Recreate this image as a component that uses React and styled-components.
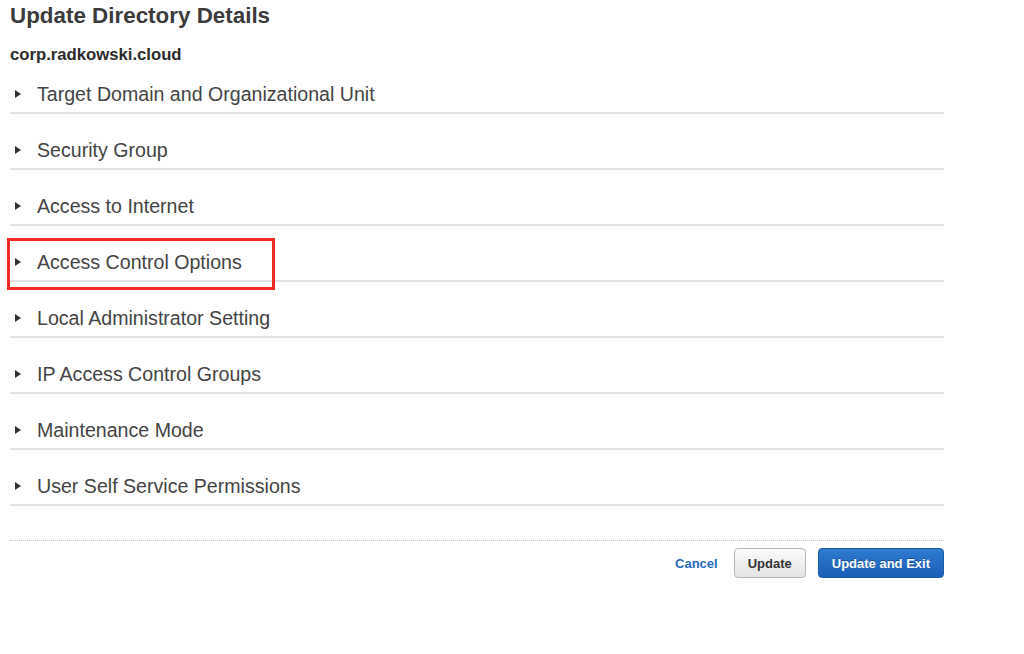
import React from 'react';
import styled, { createGlobalStyle } from 'styled-components';

const GlobalStyle = createGlobalStyle`
  body {
    margin: 0;
    background: #fff;
    font-family: "Liberation Sans", Arial, sans-serif;
    color: #444;
  }
`;

const Page = styled.div`
  width: 934px;
  padding: 3px 0 0 10px;
`;

const Title = styled.h1`
  margin: 0;
  font-size: 22.4px;
  line-height: 26px;
  font-weight: bold;
  color: #3b3b3b;
`;

const Domain = styled.div`
  margin-top: 17px;
  font-size: 16.7px;
  line-height: 18px;
  font-weight: bold;
  color: #2b2b2b;
`;

const List = styled.div`
  display: flex;
  flex-direction: column;
  margin-top: -6px;
`;

const Row = styled.div`
  position: relative;
  display: flex;
  align-items: center;
  height: 20px;
  padding: 26px 0 8px 0;
  border-bottom: 2px solid #e3e3e3;
`;

const Caret = styled.span`
  width: 0;
  height: 0;
  margin: 0 16px 0 5px;
  border-top: 4.5px solid transparent;
  border-bottom: 4.5px solid transparent;
  border-left: 6px solid #333;
`;

const Label = styled.span`
  font-size: 19.6px;
  color: #444;
`;

const Highlight = styled.div`
  position: absolute;
  left: -3px;
  top: 12px;
  width: 262px;
  height: 46px;
  border: 3px solid #ee2a24;
`;

const Footer = styled.div`
  margin-top: 34px;
  border-top: 1px dotted #c4c4c4;
  display: flex;
  justify-content: flex-end;
  align-items: center;
  padding-top: 7px;
`;

const LinkButton = styled.button`
  border: none;
  background: none;
  font-family: inherit;
  font-size: 13px;
  font-weight: bold;
  color: #1f6bc1;
  padding: 0;
  margin-right: 16px;
  cursor: pointer;
`;

const Button = styled.button`
  height: 30px;
  padding: 0 13px;
  margin-left: ${p => (p.primary ? '12px' : '0')};
  border-radius: 4px;
  font-family: inherit;
  font-size: 13px;
  font-weight: bold;
  cursor: pointer;
  border: 1px solid ${p => (p.primary ? '#1a5aa6' : '#b5b5b5')};
  color: ${p => (p.primary ? '#fff' : '#333')};
  background: ${p =>
    p.primary
      ? 'linear-gradient(#2f7bd2, #1a5fb7)'
      : 'linear-gradient(#fbfbfb, #e4e4e4)'};
  text-shadow: ${p => (p.primary ? '0 -1px 0 rgba(0,0,0,0.3)' : 'none')};
`;

const sections = [
  'Target Domain and Organizational Unit',
  'Security Group',
  'Access to Internet',
  'Access Control Options',
  'Local Administrator Setting',
  'IP Access Control Groups',
  'Maintenance Mode',
  'User Self Service Permissions',
];

export default function App() {
  return (
    <Page>
      <GlobalStyle />
      <Title>Update Directory Details</Title>
      <Domain>corp.radkowski.cloud</Domain>
      <List>
        {sections.map(s => (
          <Row key={s}>
            <Caret />
            <Label>{s}</Label>
            {s === 'Access Control Options' && <Highlight />}
          </Row>
        ))}
      </List>
      <Footer>
        <LinkButton>Cancel</LinkButton>
        <Button>Update</Button>
        <Button primary>Update and Exit</Button>
      </Footer>
    </Page>
  );
}
